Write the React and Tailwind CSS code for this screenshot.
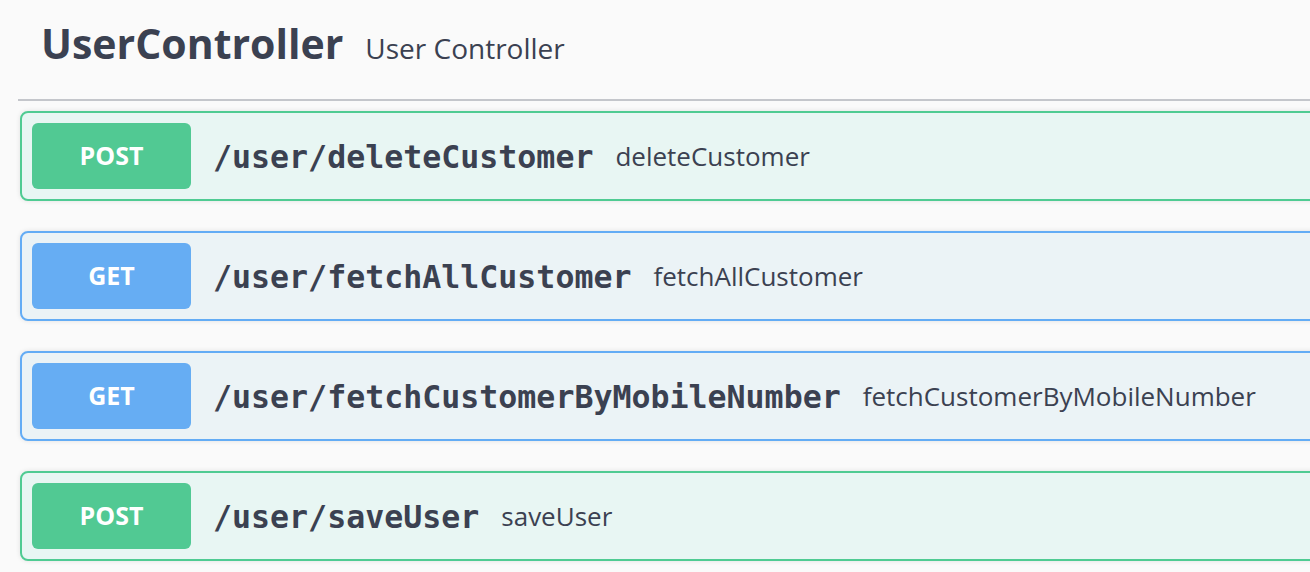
import React from "react";

const ops = [
  { method: "POST", path: "/user/deleteCustomer", summary: "deleteCustomer" },
  { method: "GET", path: "/user/fetchAllCustomer", summary: "fetchAllCustomer" },
  { method: "GET", path: "/user/fetchCustomerByMobileNumber", summary: "fetchCustomerByMobileNumber" },
  { method: "POST", path: "/user/saveUser", summary: "saveUser" },
];

const Operation = ({ method, path, summary }) => {
  const isPost = method === "POST";
  return (
    <div
      className={`ml-5 mr-[-40px] mb-[30px] flex items-center rounded-lg border-2 p-[10px] shadow-[0_0_5px_rgba(0,0,0,0.1)] ${
        isPost ? "border-[#4fcb92] bg-[#e8f6f3]" : "border-[#63acf5] bg-[#ebf3f6]"
      }`}
    >
      <div
        className={`flex h-[66px] w-[159px] shrink-0 items-center justify-center rounded-md text-[25px] font-bold text-white ${
          isPost ? "bg-[#51c993]" : "bg-[#66adf3]"
        }`}
        style={{ fontFamily: '"Open Sans", sans-serif' }}
      >
        {method}
      </div>
      <span className="pl-[22px] pt-[4px] text-[31.6px] font-bold text-[#3b4151] font-['DejaVu_Sans_Mono',monospace]">
        {path}
      </span>
      <span className="pl-[22px] text-[26px] text-[#3b4151] font-['Open_Sans',sans-serif]">
        {summary}
      </span>
    </div>
  );
};

export default function App() {
  return (
    <div className="h-[572px] w-[1310px] overflow-hidden bg-[#fafafa]">
      <div className="ml-[18px] flex items-baseline border-b-2 border-[#c4c6cb] pl-[23px] pt-[19px] pb-[30px]">
        <h3 className="text-[41px] font-bold leading-[1.2] text-[#3b4151] font-['Open_Sans',sans-serif]">
          UserController
        </h3>
        <span className="pl-[22px] text-[28px] text-[#3b4151] font-['Open_Sans',sans-serif]">
          User Controller
        </span>
      </div>
      <div className="pt-[10px]">
        {ops.map((op) => (
          <Operation key={op.path} {...op} />
        ))}
      </div>
    </div>
  );
}
